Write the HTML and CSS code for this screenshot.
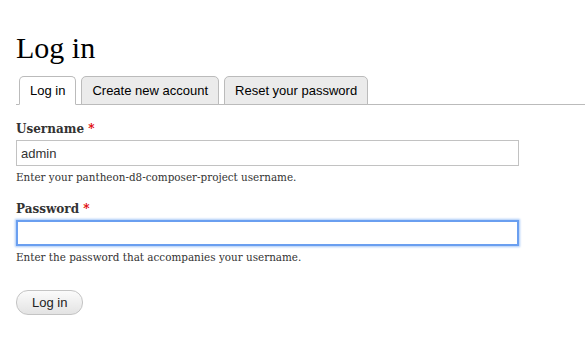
FILE: index.html
```html
<!DOCTYPE html>
<html lang="en">
<head>
  <title>Log in</title>
  <link rel="stylesheet" href="styles.css">
</head>
<body>

  <h1 class="page-title">Log in</h1>

  <ul class="tabs">
    <li class="tab is-active"><a href="#">Log in</a></li>
    <li class="tab"><a href="#">Create new account</a></li>
    <li class="tab"><a href="#">Reset your password</a></li>
  </ul>

  <form class="login-form">
    <div class="form-item">
      <label class="form-label">Username <span class="required">*</span></label>
      <input class="form-text" type="text" value="admin">
      <div class="description">Enter your pantheon-d8-composer-project username.</div>
    </div>

    <div class="form-item">
      <label class="form-label">Password <span class="required">*</span></label>
      <input class="form-text is-focused" type="password">
      <div class="description">Enter the password that accompanies your username.</div>
    </div>

    <button class="submit-button" type="button">Log in</button>
  </form>

</body>
</html>
```

FILE: styles.css
```css
body {
  margin: 0;
  background-color: white;
  color: #3b3b3b;
  font-family: "DejaVu Serif", serif;
}

.page-title {
  margin: 0;
  padding: 31px 0 0 16px;
  font-family: "Liberation Serif", serif;
  font-size: 30px;
  font-weight: normal;
  line-height: 34px;
  color: black;
}

.tabs {
  list-style: none;
  display: flex;
  gap: 5px;
  margin: 11px 0 0 16px;
  padding: 0 0 0 3px;
  border-bottom: 1px solid #bbbbbb;
}

.tab {
  border: 1px solid #bbbbbb;
  border-radius: 5px 5px 0 0;
  background-color: #ebebeb;
  margin-bottom: -1px;
}

.tab.is-active {
  background-color: white;
  border-bottom-color: white;
}

.tab a {
  display: block;
  padding: 5px 10px 5px 10px;
  font-family: "Liberation Sans", Arial, sans-serif;
  font-size: 13px;
  line-height: 17px;
  color: black;
  text-decoration: none;
}

.login-form {
  padding: 16px 0 0 16px;
}

.form-item {
  margin-bottom: 17px;
}

.form-label {
  display: block;
  font-size: 12px;
  font-weight: bold;
  line-height: 16px;
  margin-bottom: 3px;
  color: #333333;
}

.required {
  color: #e00000;
}

.form-text {
  display: block;
  box-sizing: border-box;
  width: 503px;
  height: 26px;
  margin: 0;
  padding: 2px 4px;
  border: 1px solid #c2c2c2;
  font-family: "Liberation Sans", Arial, sans-serif;
  font-size: 13px;
  color: #333333;
  outline: none;
}

.form-text.is-focused {
  border: 2px solid #6a9ff0;
  box-shadow: 0 0 2px 1px #a9c9f7;
}

.description {
  margin-top: 4px;
  font-size: 10.4px;
  line-height: 14px;
  color: #333333;
}

.submit-button {
  margin-top: 9px;
  padding: 4px 15px 3px 15px;
  border: 1px solid #c4c4c4;
  border-radius: 12px;
  background: linear-gradient(#fbfbfb, #e3e3e3);
  font-family: "Liberation Sans", Arial, sans-serif;
  font-size: 13px;
  line-height: 16px;
  color: #222222;
  cursor: pointer;
}
```
